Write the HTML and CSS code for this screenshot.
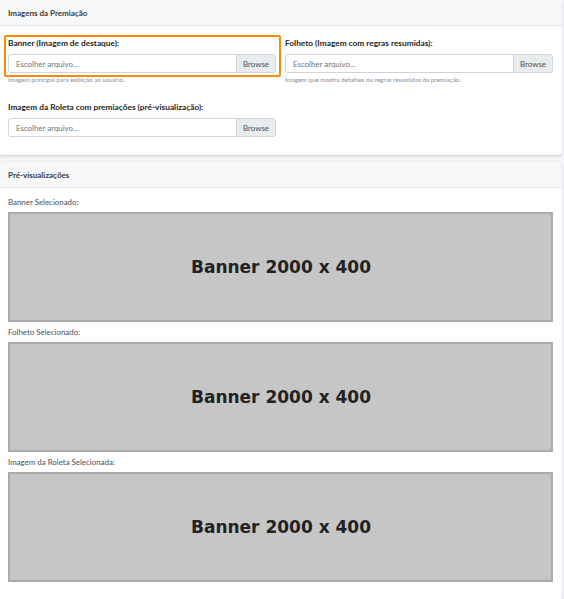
FILE: index.html
```html
<!DOCTYPE html>
<html lang="pt-BR">
<head>
<meta charset="utf-8">
<title>Imagens da Premiação</title>
<link rel="stylesheet" href="styles.css">
</head>
<body>
<div class="page">
  <section class="card">
    <div class="card-header">Imagens da Premiação</div>
    <div class="card-body form-grid">
      <div class="form-group highlight">
        <label class="label">Banner (Imagem de destaque):</label>
        <div class="file-input">
          <span class="placeholder">Escolher arquivo...</span>
          <span class="browse">Browse</span>
        </div>
        <small class="help">Imagem principal para exibição ao usuário.</small>
      </div>
      <div class="form-group">
        <label class="label">Folheto (Imagem com regras resumidas):</label>
        <div class="file-input">
          <span class="placeholder">Escolher arquivo...</span>
          <span class="browse">Browse</span>
        </div>
        <small class="help">Imagem que mostra detalhes ou regras resumidas da premiação.</small>
      </div>
      <div class="form-group">
        <label class="label">Imagem da Roleta com premiações (pré-visualização):</label>
        <div class="file-input">
          <span class="placeholder">Escolher arquivo...</span>
          <span class="browse">Browse</span>
        </div>
      </div>
    </div>
  </section>

  <section class="card">
    <div class="card-header">Pré-visualizações</div>
    <div class="card-body previews">
      <div class="preview">
        <p class="preview-label">Banner Selecionado:</p>
        <div class="placeholder-img"><span>Banner 2000 x 400</span></div>
      </div>
      <div class="preview">
        <p class="preview-label">Folheto Selecionado:</p>
        <div class="placeholder-img"><span>Banner 2000 x 400</span></div>
      </div>
      <div class="preview">
        <p class="preview-label">Imagem da Roleta Selecionada:</p>
        <div class="placeholder-img"><span>Banner 2000 x 400</span></div>
      </div>
    </div>
  </section>
</div>
</body>
</html>
```

FILE: styles.css
```css
* { box-sizing: border-box; }

html, body {
  margin: 0;
  padding: 0;
}

body {
  background: #f4f6f9;
  font-family: Lato, "Noto Sans", "Liberation Sans", sans-serif;
  color: #212529;
  width: 564px;
  overflow: hidden;
}

.page {
  display: flex;
  flex-direction: column;
  gap: 7px;
  margin-left: -1px;
  width: 563px;
}

.card {
  background: #fff;
  border-radius: 4px;
  box-shadow: 0 0 1px rgba(0,0,0,.13), 0 1px 3px rgba(0,0,0,.15);
}

.card-header {
  height: 26px;
  display: flex;
  align-items: center;
  padding-left: 9px;
  background: #f7f8fa;
  border-bottom: 1px solid #e3e5e8;
  border-radius: 4px 4px 0 0;
  font-size: 8px;
  font-weight: 700;
  color: #343a40;
}

.card-body {
  padding: 11px 10px 18px 9px;
}

.form-grid {
  display: grid;
  grid-template-columns: 268px 268px;
  column-gap: 9px;
  row-gap: 17px;
}

.form-group {
  display: flex;
  flex-direction: column;
  position: relative;
}

.highlight::before {
  content: "";
  position: absolute;
  left: -4px;
  top: -2px;
  width: 273px;
  height: 38px;
  border: 2.5px solid #ff8a00;
  border-radius: 2px;
}

.label {
  font-size: 8.3px;
  font-weight: 700;
  color: #212529;
  height: 12px;
  line-height: 12px;
  margin-bottom: 5px;
}

.file-input {
  display: flex;
  height: 19px;
  border: 1px solid #ced4da;
  border-radius: 3px;
  overflow: hidden;
  font-size: 7.9px;
}

.placeholder {
  flex: 1;
  display: flex;
  align-items: center;
  padding-left: 7px;
  color: #6c757d;
}

.browse {
  display: flex;
  align-items: center;
  padding: 0 6px;
  background: #e9ecef;
  border-left: 1px solid #ced4da;
  color: #495057;
}

.help {
  font-size: 6.3px;
  color: #868e96;
  margin-top: 3px;
  line-height: 8px;
}

.previews {
  display: flex;
  flex-direction: column;
  gap: 6px;
  padding-top: 10px;
}

.preview-label {
  margin: 0 0 5px 0;
  font-size: 7.9px;
  line-height: 9px;
  color: #495057;
}

.placeholder-img {
  width: 545px;
  height: 110px;
  background: #c6c6c6;
  border: 2px solid #ababab;
  display: flex;
  align-items: center;
  justify-content: center;
}

.placeholder-img span {
  font-family: "DejaVu Sans", sans-serif;
  font-weight: 700;
  font-size: 17px;
  color: #222;
  padding-left: 1px;
}
```
